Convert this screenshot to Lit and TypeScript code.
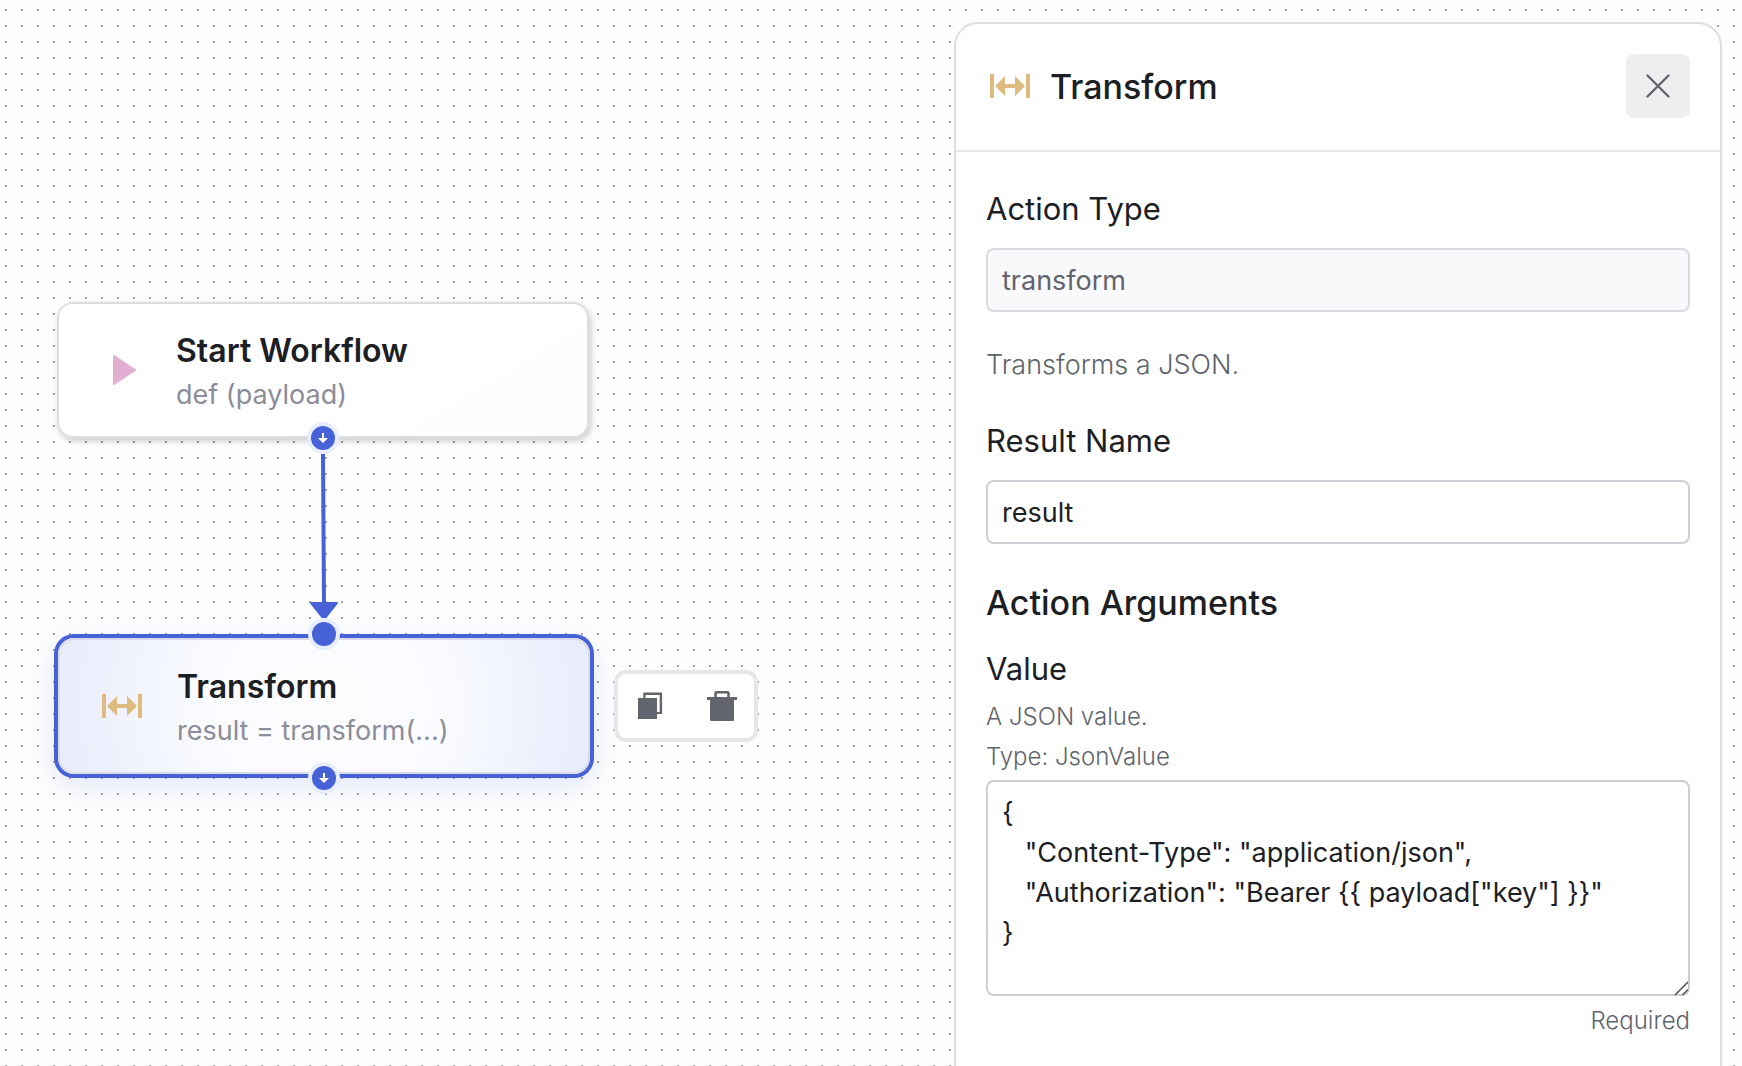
import { LitElement, html, svg, css, nothing } from "lit";
import { customElement, property } from "lit/decorators.js";

const transformIcon = svg`
  <path d="M0 8h4v24H0zM36 8h4v24h-4zM5 20 15 10v8h10v-8l10 10-10 10v-8H15v8z" fill="#debc80" />`;

const playIcon = svg`
  <path d="M13 6v28l21-14z" fill="#e2afd3" stroke="#e2afd3" stroke-width="2" stroke-linejoin="round" />`;

@customElement("action-icon")
export class ActionIcon extends LitElement {
  @property() name = "transform";

  static styles = css`
    :host {
      display: block;
      flex: none;
      width: 40px;
      height: 40px;
    }
    .glyph {
      display: block;
      width: 100%;
      height: 100%;
    }
  `;

  render() {
    return html`<svg class="glyph" viewBox="0 0 40 40" aria-hidden="true">
      ${this.name === "play" ? playIcon : transformIcon}
    </svg>`;
  }
}

@customElement("workflow-node")
export class WorkflowNode extends LitElement {
  @property() icon = "transform";
  @property() heading = "";
  @property() detail = "";
  @property({ type: Boolean, reflect: true }) selected = false;

  static styles = css`
    :host {
      display: block;
      box-sizing: border-box;
      width: 532px;
      border: 2px solid #dddde4;
      border-radius: 16px;
      background: linear-gradient(150deg, #ffffff 60%, #fdfdfd);
      box-shadow: 2px 3px 6px rgba(0, 0, 0, 0.2);
    }
    :host([selected]) {
      border-color: #d9dce7;
      background: radial-gradient(circle at center, #fdfdff 0, #fafbff 120px, #f3f6fe 174px, #e9ecfb 264px);
      box-shadow: 0 0 0 4px #4762d7, 0 8px 24px 4px rgba(71, 98, 215, 0.14);
    }
    .content {
      display: flex;
      align-items: center;
      gap: 35px;
      padding: 25px 42px 19px;
    }
    .icon {
      margin-bottom: 6px;
    }
    .heading,
    .detail {
      margin: 0;
      line-height: 44px;
    }
    .heading {
      font-size: 32px;
      font-weight: 600;
      color: #1c2024;
    }
    .detail {
      font-size: 27px;
      color: #8b8d98;
    }
    .handle {
      position: absolute;
      left: 50%;
      box-sizing: border-box;
      width: 32px;
      height: 32px;
      margin-left: -16px;
      padding: 0;
      border: 4px solid #e7edfd;
      border-radius: 50%;
      background: #4762d7;
    }
    .handle-in {
      top: -22px;
    }
    .handle-out {
      bottom: -18px;
    }
    :host([selected]) .handle-out {
      bottom: -22px;
    }
    .arrow {
      display: block;
      width: 24px;
      height: 24px;
    }
  `;

  render() {
    return html`
      <div class="content">
        <action-icon class="icon" name=${this.icon}></action-icon>
        <div>
          <h3 class="heading">${this.heading}</h3>
          <p class="detail">${this.detail}</p>
        </div>
      </div>
      ${this.selected ? html`<span class="handle handle-in"></span>` : nothing}
      <button class="handle handle-out" type="button" aria-label="Add next action">
        <svg class="arrow" viewBox="0 0 24 24" aria-hidden="true">
          <path d="M11 7h2v5h4l-5 5-5-5h4z" fill="#fff" />
        </svg>
      </button>
    `;
  }
}

@customElement("action-panel")
export class ActionPanel extends LitElement {
  static styles = css`
    :host {
      display: block;
      box-sizing: border-box;
      border: 2px solid #dddde4;
      border-bottom: 0;
      border-radius: 24px 24px 0 0;
      background: #fff;
      color: #1c2024;
    }
    .header {
      display: flex;
      align-items: center;
      gap: 20px;
      padding: 30px 30px 32px 34px;
      border-bottom: 2px solid #e6e6eb;
    }
    .title {
      flex: 1;
      margin: 0;
      padding-top: 2px;
      font-size: 34px;
      font-weight: 500;
      line-height: 44px;
    }
    .close {
      display: grid;
      place-items: center;
      width: 64px;
      height: 64px;
      padding: 0;
      border: 0;
      border-radius: 8px;
      background: #efeff1;
    }
    .cross {
      width: 24px;
      height: 24px;
    }
    .body {
      padding: 36px 30px 24px;
    }
    .label {
      display: block;
      font-size: 31px;
      line-height: 42px;
    }
    .control {
      display: block;
      box-sizing: border-box;
      width: 100%;
      border: 2px solid #cdced7;
      border-radius: 8px;
      background: #fff;
      color: #1c2024;
      font-family: inherit;
      font-size: 27px;
      line-height: 40px;
      outline: none;
    }
    .text {
      height: 64px;
      margin-top: 18px;
      padding: 0 14px;
    }
    .text:disabled {
      border-color: #d9d9e0;
      background: #f9f9fb;
      color: #60646c;
      opacity: 1;
    }
    .summary {
      margin: 33px 0 35px;
      font-size: 27px;
      font-weight: 300;
      line-height: 40px;
      color: #60646c;
    }
    .section {
      margin: 37px 0 23px;
      font-size: 34px;
      font-weight: 500;
      line-height: 44px;
    }
    .hint {
      margin: 0;
      font-size: 24px;
      font-weight: 300;
      line-height: 40px;
      color: #60646c;
    }
    .hints {
      margin: 7px 0 3px;
    }
    .editor {
      position: relative;
      margin-bottom: 5px;
    }
    .code {
      height: 216px;
      padding: 11px 14px;
      resize: vertical;
    }
    .code::-webkit-resizer {
      display: none;
    }
    .grip {
      position: absolute;
      right: 0;
      bottom: 0;
      width: 16px;
      height: 16px;
      pointer-events: none;
    }
    .required {
      text-align: right;
    }
  `;

  private json = `{
   "Content-Type": "application/json",
   "Authorization": "Bearer {{ payload["key"] }}"
}`;

  render() {
    return html`
      <header class="header">
        <action-icon name="transform"></action-icon>
        <h2 class="title">Transform</h2>
        <button class="close" type="button" aria-label="Close">
          <svg class="cross" viewBox="0 0 24 24" aria-hidden="true">
            <path d="M1.5 1.5l21 21M22.5 1.5l-21 21" fill="none" stroke="#65666d" stroke-width="2.4" stroke-linecap="round" />
          </svg>
        </button>
      </header>
      <div class="body">
        <label class="label" for="type">Action Type</label>
        <input class="control text" id="type" type="text" .value=${"transform"} disabled />
        <p class="summary">Transforms a JSON.</p>
        <label class="label" for="result">Result Name</label>
        <input class="control text" id="result" type="text" .value=${"result"} />
        <h3 class="section">Action Arguments</h3>
        <label class="label" for="value">Value</label>
        <div class="hints">
          <p class="hint">A JSON value.</p>
          <p class="hint">Type: JsonValue</p>
        </div>
        <div class="editor">
          <textarea class="control code" id="value" spellcheck="false" .value=${this.json}></textarea>
          <svg class="grip" viewBox="0 0 16 16" aria-hidden="true">
            <path d="M1 15 14 2M8.5 15 14 9.5" fill="none" stroke="#55565b" stroke-width="1.6" />
          </svg>
        </div>
        <p class="hint required">Required</p>
      </div>
    `;
  }
}

@customElement("app-root")
export class AppRoot extends LitElement {
  static styles = css`
    :host {
      position: relative;
      display: flex;
      justify-content: flex-end;
      box-sizing: border-box;
      min-height: 100vh;
      padding: 22px 20px 0 0;
      overflow: hidden;
      background: #fdfdfd;
      font-family: Inter, "Liberation Sans", sans-serif;
    }
    .canvas {
      position: absolute;
      inset: 0;
    }
    .layer {
      position: absolute;
      width: 100%;
      height: 100%;
    }
    .start {
      position: absolute;
      left: 57px;
      top: 302px;
    }
    .transform {
      position: absolute;
      left: 58px;
      top: 638px;
    }
    .toolbar {
      position: absolute;
      left: 614px;
      top: 670px;
      display: flex;
      gap: 8px;
      border: 4px solid #e6e7eb;
      border-radius: 12px;
      background: #fff;
    }
    .tool {
      display: grid;
      place-items: center;
      width: 64px;
      height: 64px;
      padding: 0;
      border: 0;
      background: none;
    }
    .tool-icon {
      width: 32px;
      height: 32px;
    }
    .panel {
      position: relative;
      flex: 0 1 768px;
    }
  `;

  render() {
    return html`
      <main class="canvas">
        <svg class="layer" aria-hidden="true">
          <pattern id="dots" x="5" y="9" width="16" height="16" patternUnits="userSpaceOnUse">
            <rect width="2" height="2" fill="#a4a4a4" />
          </pattern>
          <rect width="100%" height="100%" fill="url(#dots)" />
        </svg>
        <workflow-node class="start" icon="play" heading="Start Workflow" detail="def (payload)"></workflow-node>
        <workflow-node class="transform" icon="transform" heading="Transform" detail="result = transform(...)" selected></workflow-node>
        <svg class="layer" aria-hidden="true" pointer-events="none">
          <path d="M323 454 324 604" fill="none" stroke="#4762d7" stroke-width="4" />
          <path d="M311 603h26l-11 14h-4z" fill="#4762d7" stroke="#4762d7" stroke-width="2" stroke-linejoin="round" />
        </svg>
        <div class="toolbar" role="toolbar" aria-label="Node actions">
          <button class="tool" type="button" aria-label="Duplicate">
            <svg class="tool-icon" viewBox="0 0 32 32" aria-hidden="true">
              <path d="M4 8h19v21H4z" fill="#62656e" />
              <path d="M10.5 8V3.8h16.4v19.1H23" fill="none" stroke="#62656e" stroke-width="2.4" />
              <path d="M11.7 7h12.3v15" fill="none" stroke="#fff" stroke-width="2" />
            </svg>
          </button>
          <button class="tool" type="button" aria-label="Delete">
            <svg class="tool-icon" viewBox="0 0 32 32" aria-hidden="true">
              <path d="M1 7h30v3h-3v20a1 1 0 0 1-1 1H5a1 1 0 0 1-1-1V10H1z" fill="#62656e" />
              <path d="M9.5 8V3.3a1 1 0 0 1 1-1h11a1 1 0 0 1 1 1V8" fill="none" stroke="#62656e" stroke-width="2.6" />
            </svg>
          </button>
        </div>
      </main>
      <action-panel class="panel"></action-panel>
    `;
  }
}
